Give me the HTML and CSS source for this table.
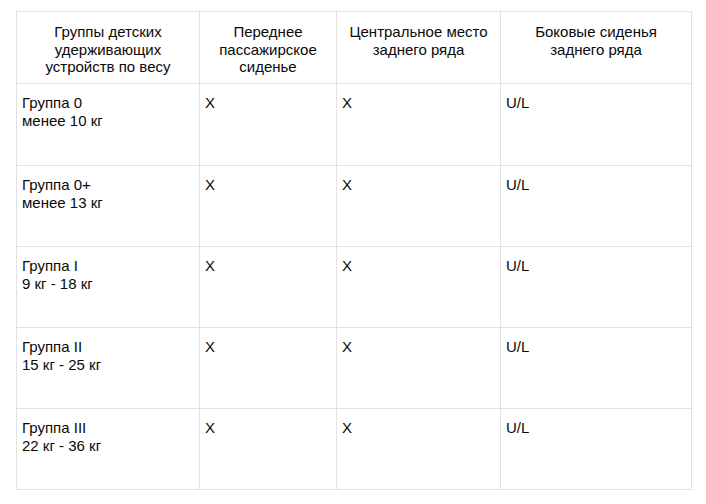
FILE: index.html
```html
<!DOCTYPE html>
<html lang="ru">
<head>
<meta charset="utf-8">
<link rel="stylesheet" href="styles.css">
</head>
<body>
<table class="seats">
  <colgroup>
    <col class="c1"><col class="c2"><col class="c3"><col class="c4">
  </colgroup>
  <thead>
    <tr>
      <th>Группы детских удерживающих устройств по весу</th>
      <th>Переднее пассажирское сиденье</th>
      <th>Центральное место заднего ряда</th>
      <th>Боковые сиденья заднего ряда</th>
    </tr>
  </thead>
  <tbody>
    <tr><td>Группа 0<br>менее 10 кг</td><td>X</td><td>X</td><td>U/L</td></tr>
    <tr><td>Группа 0+<br>менее 13 кг</td><td>X</td><td>X</td><td>U/L</td></tr>
    <tr><td>Группа I<br>9 кг - 18 кг</td><td>X</td><td>X</td><td>U/L</td></tr>
    <tr><td>Группа II<br>15 кг - 25 кг</td><td>X</td><td>X</td><td>U/L</td></tr>
    <tr><td>Группа III<br>22 кг - 36 кг</td><td>X</td><td>X</td><td>U/L</td></tr>
  </tbody>
</table>
</body>
</html>
```
FILE: styles.css
```css
html, body {
  margin: 0;
  padding: 0;
  background: #ffffff;
}
body {
  padding: 11px 0 0 16px;
  font-family: "Liberation Sans", Arial, sans-serif;
  font-size: 15px;
  line-height: 17.5px;
  color: #0a0a0a;
}
.seats {
  border-collapse: collapse;
  table-layout: fixed;
  width: 675px;
}
.c1 { width: 183px; }
.c2 { width: 137px; }
.c3 { width: 164px; }
.c4 { width: 191px; }
.seats th, .seats td {
  border: 1px solid #e2e2e2;
  vertical-align: top;
}
.seats th {
  font-weight: normal;
  text-align: center;
  padding: 11px 8px 6px;
  height: 54px;
}
.seats td {
  text-align: left;
  padding: 10px 5px 0;
  height: 70px;
}
.seats tbody tr:first-child td {
  height: 71px;
}
```
